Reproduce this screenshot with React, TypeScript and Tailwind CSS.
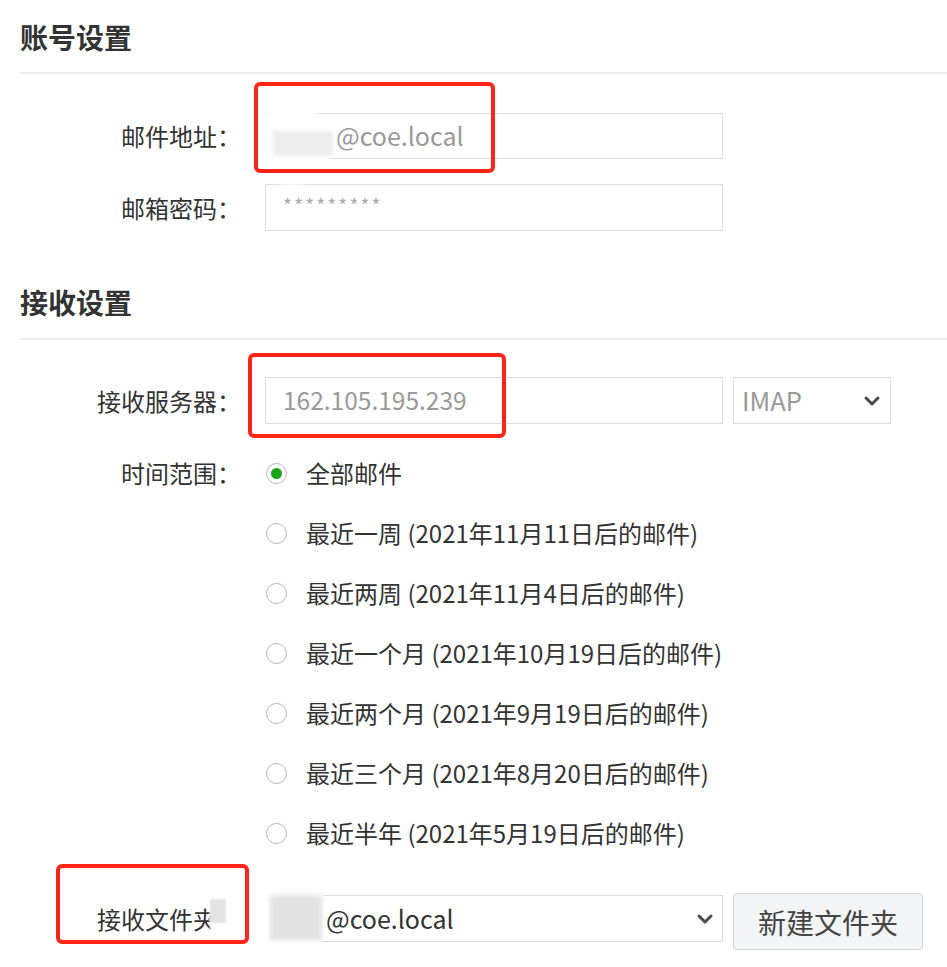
/**
 * 邮箱设置页 — 账号设置 + 接收设置，带截图标注（红框 / 打码）。
 */

const FONT = {
  fontFamily: '"Noto Sans CJK SC", "Noto Sans", sans-serif',
};

const RANGES = [
  "全部邮件",
  "最近一周 (2021年11月11日后的邮件)",
  "最近两周 (2021年11月4日后的邮件)",
  "最近一个月 (2021年10月19日后的邮件)",
  "最近两个月 (2021年9月19日后的邮件)",
  "最近三个月 (2021年8月20日后的邮件)",
  "最近半年 (2021年5月19日后的邮件)",
];

function Chevron() {
  return (
    <svg width="18" height="12" viewBox="0 0 18 12" className="flex-none">
      <path d="M3 3l6 6 6-6" fill="none" stroke="#4a4a4a" strokeWidth="3" strokeLinecap="round" strokeLinejoin="round" />
    </svg>
  );
}

function Label({ children }: { children: React.ReactNode }) {
  return (
    <div className="w-[257px] flex-none pr-[16px] text-right text-[24px] leading-[32px] text-[#333]">
      {children}
    </div>
  );
}

function Heading({ children }: { children: React.ReactNode }) {
  return (
    <div className="pl-[20px] text-[28px] font-bold leading-[32px] text-[#333]">{children}</div>
  );
}

export default function App() {
  return (
    <div className="relative h-[967px] w-[947px] overflow-hidden bg-white" style={FONT}>
      {/* 账号设置 */}
      <div className="pt-[21px]">
        <Heading>账号设置</Heading>
      </div>
      <div className="ml-[20px] mt-[19px] h-[2px] bg-[#ececec]" />

      <div className="mt-[39px] flex items-center">
        <Label>邮件地址：</Label>
        <div className="ml-[8px] flex h-[46px] w-[458px] items-center border border-[#dcdcdc] pl-[70px] text-[25px] text-[#999]">
          @coe.local
        </div>
      </div>
      <div className="mt-[25px] flex items-center">
        <Label>邮箱密码：</Label>
        <div className="ml-[8px] flex h-[47px] w-[458px] items-start border border-[#dcdcdc] pl-[17px] pt-[6px] text-[19px] tracking-[2.2px] text-[#aaa]">
          *********
        </div>
      </div>

      {/* 接收设置 */}
      <div className="mt-[55px]">
        <Heading>接收设置</Heading>
      </div>
      <div className="ml-[20px] mt-[20px] h-[2px] bg-[#ececec]" />

      <div className="mt-[37px] flex items-center">
        <Label>接收服务器：</Label>
        <div className="ml-[8px] flex h-[47px] w-[458px] items-center border border-[#dcdcdc] pl-[17px] text-[24.5px] text-[#999]">
          162.105.195.239
        </div>
        <div className="ml-[10px] flex h-[47px] w-[158px] items-center justify-between border border-[#dcdcdc] pl-[8px] pr-[9px] text-[25.5px] text-[#999]">
          <span>IMAP</span>
          <Chevron />
        </div>
      </div>

      <div className="mt-[19px] flex">
        <div className="flex h-[60px] items-center">
          <Label>时间范围：</Label>
        </div>
        <div className="flex flex-col">
          {RANGES.map((r, i) => (
            <div key={r} className="flex h-[60px] items-center">
              <span className="ml-[9px] grid h-[21px] w-[21px] flex-none place-items-center rounded-full border border-[#b5b5b5] bg-white">
                {i === 0 && <span className="h-[11px] w-[11px] rounded-full bg-[#1aa41a]" />}
              </span>
              <span className="ml-[19px] text-[24px] leading-[32px] text-[#333]">{r}</span>
            </div>
          ))}
        </div>
      </div>

      {/* 接收文件夹 */}
      <div className="mt-[30px] flex items-start">
        <div className="mt-[10px]">
          <Label>
            <span className="mr-[24px]">接收文件夹</span>
          </Label>
        </div>
        <div className="ml-[8px] mt-[2px] flex h-[47px] w-[458px] items-center justify-between border border-[#dcdcdc] pl-[60px] pr-[8px] text-[25px] text-[#333]">
          <span>@coe.local</span>
          <Chevron />
        </div>
        <button className="ml-[10px] h-[57px] w-[190px] rounded-[3px] border border-[#d6d6d6] bg-[#f3f4f6] text-[28px] text-[#444]">
          新建文件夹
        </button>
      </div>

      {/* 打码 */}
      <div className="absolute left-[252px] top-[104px] h-[82px] w-[80px] rounded-full bg-white blur-[2px]" />
      <div className="absolute left-[273px] top-[131px] h-[25px] w-[60px] bg-[#ececec] blur-[2px]" />
      <div className="absolute left-[252px] top-[868px] h-[99px] w-[72px] rounded-full bg-white blur-[2px]" />
      <div className="absolute left-[270px] top-[895px] h-[45px] w-[52px] bg-[#e2e2e2] blur-[2px]" />
      <div className="absolute left-[210px] top-[895px] h-[44px] w-[26px] bg-white blur-[1px]" />
      <div className="absolute left-[210px] top-[899px] h-[24px] w-[16px] bg-[#e3e3e3] blur-[1px]" />

      {/* 标注红框 */}
      <div className="absolute left-[254px] top-[82px] h-[91px] w-[241px] rounded-[6px] border-[4px] border-[#ff2418]" />
      <div className="absolute left-[248px] top-[353px] h-[85px] w-[258px] rounded-[6px] border-[4px] border-[#ff2418]" />
      <div className="absolute left-[56px] top-[864px] h-[80px] w-[193px] rounded-[6px] border-[4px] border-[#ff2418]" />
    </div>
  );
}
